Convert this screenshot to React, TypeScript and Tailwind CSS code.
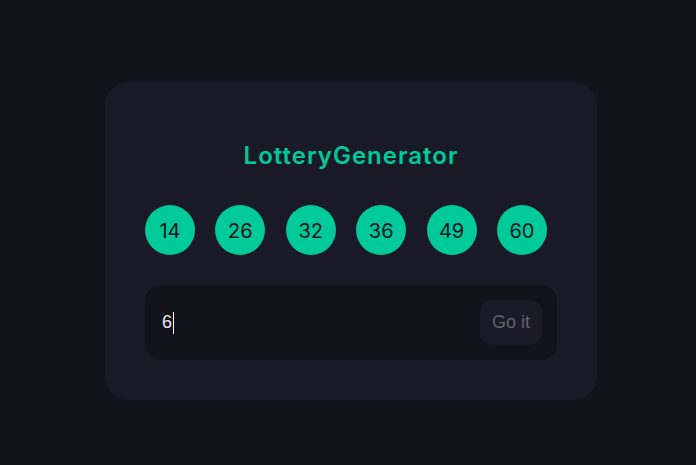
import React from 'react'

const NUMBERS = [14, 26, 32, 36, 49, 60]

export default function App() {
  return (
    <div className="min-h-[465px] w-full bg-[#13131c] pt-[82px] pl-[105px]">
      <div className="w-[492px] h-[318px] rounded-[24px] bg-[#1a1a27] px-10 flex flex-col">
        <h1
          className="mt-[58px] text-center text-[24px] leading-[32px] font-semibold tracking-[1px] text-[#00c99a]"
          style={{ fontFamily: 'Inter, "Open Sans", sans-serif' }}
        >
          LotteryGenerator
        </h1>

        {/* 공 */}
        <div className="mt-[33px] w-[402px] flex justify-between">
          {NUMBERS.map((n) => (
            <div
              key={n}
              className="w-[50px] h-[50px] rounded-full bg-[#00c99a] flex items-center justify-center pt-px text-[20px] text-[#14141c]"
              style={{ fontFamily: 'Inter, "Open Sans", sans-serif' }}
            >
              {n}
            </div>
          ))}
        </div>

        {/* 입력 */}
        <div className="mt-[30px] h-[75px] rounded-[16px] bg-[#13131c] flex items-center pl-[17px] pr-[15px]">
          <div
            className="flex-1 flex items-center text-[18px] text-[#e8e8ee]"
            style={{ fontFamily: '"Liberation Sans", Arial, sans-serif' }}
          >
            6<span className="ml-px w-px h-[22px] bg-white" />
          </div>
          <button
            className="w-[62px] h-[45px] rounded-[12px] bg-[#1a1a26] text-[18px] text-[#626269]"
            style={{ fontFamily: '"Liberation Sans", Arial, sans-serif' }}
          >
            Go it
          </button>
        </div>
      </div>
    </div>
  )
}
